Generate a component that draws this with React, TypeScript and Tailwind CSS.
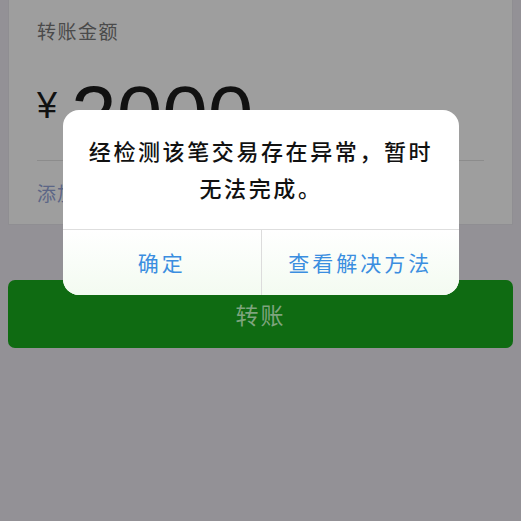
const cjk = { fontFamily: '"Noto Sans CJK SC", "Liberation Sans", sans-serif' };

const AlertDialog = () => {
  return (
    <div className="absolute left-[63px] top-[110px] flex h-[185px] w-[396px] flex-col overflow-hidden rounded-[16px] bg-white">
      <div className="flex h-[119px] flex-col items-center justify-center pb-[2px] text-center text-[22px] font-medium leading-[37px] tracking-[2.6px] text-[#111]">
        <p>经检测该笔交易存在异常，暂时</p>
        <p>无法完成。</p>
      </div>
      <div className="flex flex-1 border-t border-[#dedede] bg-gradient-to-b from-white to-[#f3fbf1]">
        <button className="flex flex-1 items-center justify-center text-[21px] tracking-[3px] text-[#3b8ee0]">
          确定
        </button>
        <div className="w-px bg-[#dcdcdc]" />
        <button className="flex flex-1 items-center justify-center text-[21px] tracking-[3px] text-[#3b8ee0]">
          查看解决方法
        </button>
      </div>
    </div>
  );
};

export default function App() {
  return (
    <div
      className="relative h-[521px] w-[521px] overflow-hidden bg-[#939196]"
      style={cjk}
    >
      <div className="mx-2 flex h-[225px] flex-col border-x border-b border-[#8f8e92] bg-[#9e9e9e] px-[28px]">
        <p className="mt-[18px] text-[19px] leading-[26px] tracking-[1.5px] text-[#4a4a4a]">
          转账金额
        </p>
        <div className="mt-[30px] flex h-[86px] items-start">
          <span
            className="mt-[12px] text-[36px] leading-[40px] text-[#111]"
            style={{ fontFamily: '"Liberation Sans", sans-serif' }}
          >
            ¥
          </span>
          <span
            className="ml-[14px] text-[82px] leading-[82px] text-[#111]"
            style={{ fontFamily: '"Liberation Sans", sans-serif' }}
          >
            2000
          </span>
        </div>
        <div className="h-px bg-[#8c8c8c]" />
        <p className="mt-[20px] text-[19px] leading-[24px] tracking-[1px] text-[#5c6686]">
          添加转账说明
        </p>
      </div>
      <div className="mx-2 mt-[55px] flex h-[68px] items-center justify-center rounded-[7px] bg-[#0f6b12] text-[23px] tracking-[2px] text-[#7ea47e]">
        转账
      </div>
      <AlertDialog />
    </div>
  );
}
